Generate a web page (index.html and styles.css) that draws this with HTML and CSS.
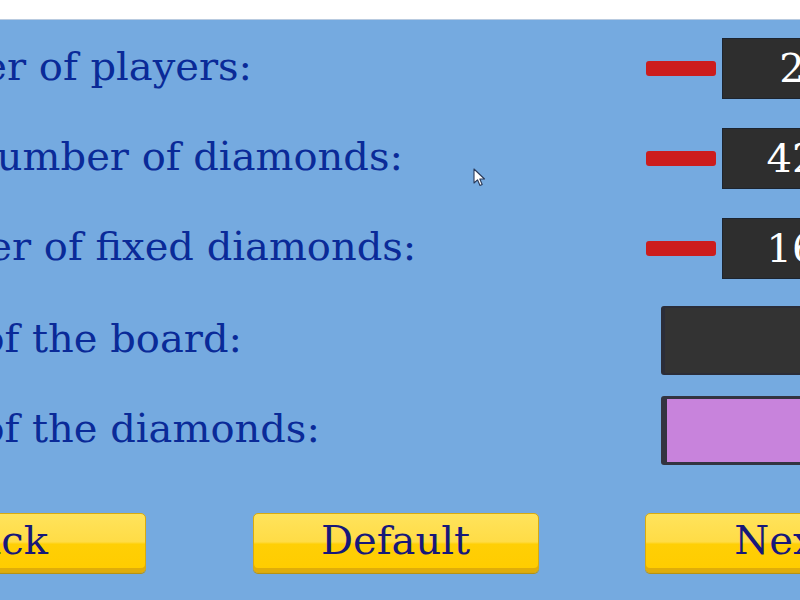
FILE: index.html
```html
<!DOCTYPE html>
<html>
<head>
<meta charset="utf-8">
<link rel="stylesheet" href="styles.css">
</head>
<body>
<div class="topband"></div>
<main class="panel">
  <div class="row">
    <div class="label label--players">Number of players:</div>
    <div class="controls">
      <span class="minus"></span>
      <span class="numbox"><span class="num">2</span></span>
    </div>
  </div>
  <div class="row">
    <div class="label label--total">Total number of diamonds:</div>
    <div class="controls">
      <span class="minus"></span>
      <span class="numbox"><span class="num">42</span></span>
    </div>
  </div>
  <div class="row">
    <div class="label label--fixed">Number of fixed diamonds:</div>
    <div class="controls">
      <span class="minus"></span>
      <span class="numbox"><span class="num">16</span></span>
    </div>
  </div>
  <div class="row row--color">
    <div class="label label--color">Color of the board:</div>
    <div class="controls">
      <span class="swatch swatch--board"></span>
    </div>
  </div>
  <div class="row row--color">
    <div class="label label--color">Color of the diamonds:</div>
    <div class="controls">
      <span class="swatch swatch--diamonds"></span>
    </div>
  </div>
  <div class="buttons">
    <button class="btn btn--back">Back</button>
    <button class="btn">Default</button>
    <button class="btn btn--next">Next</button>
  </div>
  <svg class="cursor" width="14" height="20" viewBox="0 0 14 20">
    <path d="M1 1 L1 15 L4.5 11.8 L7 17.5 L9.2 16.5 L6.8 11 L11.5 11 Z" fill="#ffffff" stroke="#2a3a5a" stroke-width="1.1" stroke-linejoin="round"/>
  </svg>
</main>
</body>
</html>
```
FILE: styles.css
```css
html, body {
  margin: 0;
  padding: 0;
  width: 800px;
  height: 600px;
  overflow: hidden;
  background: #ffffff;
}

.topband {
  height: 19px;
  background: #ffffff;
  border-bottom: 1px solid #b9cbe0;
}

.panel {
  position: relative;
  height: 580px;
  background: #75aae0;
  padding-top: 3px;
  box-sizing: border-box;
  font-family: "DejaVu Serif", "Liberation Serif", serif;
  overflow: hidden;
}

.row {
  height: 90px;
  display: flex;
  align-items: center;
  justify-content: space-between;
}

.label {
  font-size: 40px;
  color: #0a2a98;
  white-space: nowrap;
  line-height: 1;
  padding-bottom: 4px;
}

.label--players { margin-left: -141px; }
.label--fixed { margin-left: -136px; }
.label--total { margin-left: -142px; }
.label--color { margin-left: -143px; }

.controls {
  display: flex;
  align-items: center;
  gap: 6px;
  margin-right: -54px;
}

.minus {
  width: 70px;
  height: 15px;
  background: #cc1d1d;
  border-radius: 3px;
}

.numbox {
  width: 132px;
  height: 61px;
  background: #2e2e2e;
  border: 1px solid #1c2430;
  box-sizing: border-box;
  display: flex;
  align-items: center;
  justify-content: center;
}

.num {
  color: #ffffff;
  font-size: 40px;
  line-height: 1;
  padding-left: 8px;
}

.row--color .controls {
  margin-right: -40px;
}

.row--color {
  padding-top: 4px;
  box-sizing: border-box;
}

.swatch {
  width: 179px;
  height: 69px;
  border-radius: 3px;
  box-sizing: border-box;
}

.swatch--board {
  background: #333333;
  border: 2px solid #2b2d38;
  border-left-width: 4px;
}

.swatch--diamonds {
  background: #c883dc;
  border: 3px solid #333440;
  border-left-width: 6px;
}

.buttons {
  display: flex;
  justify-content: space-between;
  margin-top: 40px;
  margin-left: -140px;
  margin-right: -131px;
}

.btn {
  width: 286px;
  height: 60px;
  box-sizing: border-box;
  border: 1px solid #d9aa10;
  border-radius: 5px;
  background: linear-gradient(to bottom, #ffe35c 0%, #ffdc46 48%, #ffcf05 52%, #ffcc00 100%);
  box-shadow: inset 0 -4px 0 #e0ad0a, 0 1px 0 #b89210;
  font-family: "DejaVu Serif", "Liberation Serif", serif;
  font-size: 40px;
  color: #17187a;
  padding: 0 0 6px 0;
  line-height: 1;
  text-align: center;
}

.btn--back { padding-right: 10px; }
.btn--next { padding-right: 10px; }

.cursor {
  position: absolute;
  left: 473px;
  top: 148px;
}
```
